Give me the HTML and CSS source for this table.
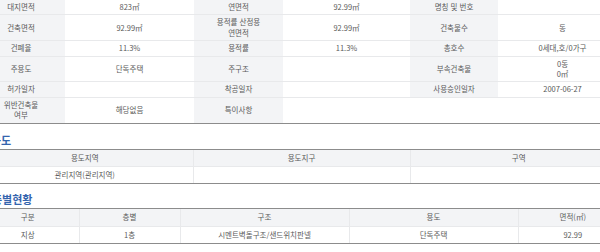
FILE: index.html
```html
<!DOCTYPE html>
<html lang="ko">
<head>
<meta charset="utf-8">
<link rel="stylesheet" href="styles.css">
</head>
<body>
<div class="page">
  <table class="info">
    <colgroup>
      <col style="width:88px"><col style="width:129px"><col style="width:89px"><col style="width:127px"><col style="width:88px"><col style="width:129px">
    </colgroup>
    <tr>
      <th>대지면적</th><td>823㎡</td><th>연면적</th><td>92.99㎡</td><th>명칭 및 번호</th><td></td>
    </tr>
    <tr>
      <th>건축면적</th><td>92.99㎡</td><th>용적률 산정용<br>연면적</th><td>92.99㎡</td><th>건축물수</th><td>동</td>
    </tr>
    <tr>
      <th>건폐율</th><td>11.3%</td><th>용적률</th><td>11.3%</td><th>총호수</th><td>0세대,호/0가구</td>
    </tr>
    <tr>
      <th>주용도</th><td>단독주택</td><th>주구조</th><td></td><th>부속건축물</th><td>0동<br>0㎡</td>
    </tr>
    <tr>
      <th>허가일자</th><td></td><th>착공일자</th><td></td><th>사용승인일자</th><td>2007-06-27</td>
    </tr>
    <tr class="last">
      <th>위반건축물<br>여부</th><td>해당없음</td><th>특이사항</th><td colspan="3"></td>
    </tr>
  </table>

  <h3 class="sec sec-use">용도</h3>
  <table class="grid">
    <colgroup>
      <col style="width:216px"><col style="width:217px"><col style="width:217px">
    </colgroup>
    <tr class="head"><th>용도지역</th><th>용도지구</th><th>구역</th></tr>
    <tr class="last"><td>관리지역(관리지역)</td><td></td><td></td></tr>
  </table>

  <h3 class="sec sec-floor">층별현황</h3>
  <table class="grid">
    <colgroup>
      <col style="width:102px"><col style="width:101px"><col style="width:169px"><col style="width:169px"><col style="width:109px">
    </colgroup>
    <tr class="head"><th>구분</th><th>층별</th><th>구조</th><th>용도</th><th>면적(㎡)</th></tr>
    <tr class="last"><td>지상</td><td>1층</td><td>시멘트벽돌구조/샌드위치판넬</td><td>단독주택</td><td>92.99</td></tr>
  </table>
</div>
</body>
</html>
```

FILE: styles.css
```css
html, body {
  margin: 0;
  padding: 0;
  background: #ffffff;
  overflow: hidden;
}

.page {
  width: 650px;
  margin-left: -23px;
  font-family: "Noto Sans CJK KR", "Noto Sans", sans-serif;
  font-size: 7.5px;
  color: #5a5a5a;
}

table {
  border-collapse: collapse;
  table-layout: fixed;
  width: 650px;
}

th, td {
  font-weight: normal;
  text-align: center;
  vertical-align: middle;
  line-height: 10.4px;
  padding: 2px 2px;
  border-bottom: 1px solid #e8e9eb;
}

.info th {
  background: #f3f4f6;
}

.info td {
  background: #ffffff;
}

.info tr.last th,
.info tr.last td {
  border-bottom: 1px solid #8c8c8c;
}

.sec {
  margin: 0;
  font-size: 11px;
  line-height: 14px;
  font-weight: bold;
  color: #3565ae;
}

.sec-use {
  padding: 9px 0 2px 14px;
}

.sec-floor {
  padding: 8px 0 2px 15px;
}

.grid {
  border-top: 1px solid #8c8c8c;
}

.grid th, .grid td {
  padding: 3px 2px;
  border-left: 1px solid #e8e9eb;
}

.grid th:first-child, .grid td:first-child {
  border-left: none;
}

.grid tr.head th {
  background: #f3f4f6;
  border-top: 1px solid #8c8c8c;
}

.grid tr.last td {
  border-bottom: 1px solid #8c8c8c;
}
```
